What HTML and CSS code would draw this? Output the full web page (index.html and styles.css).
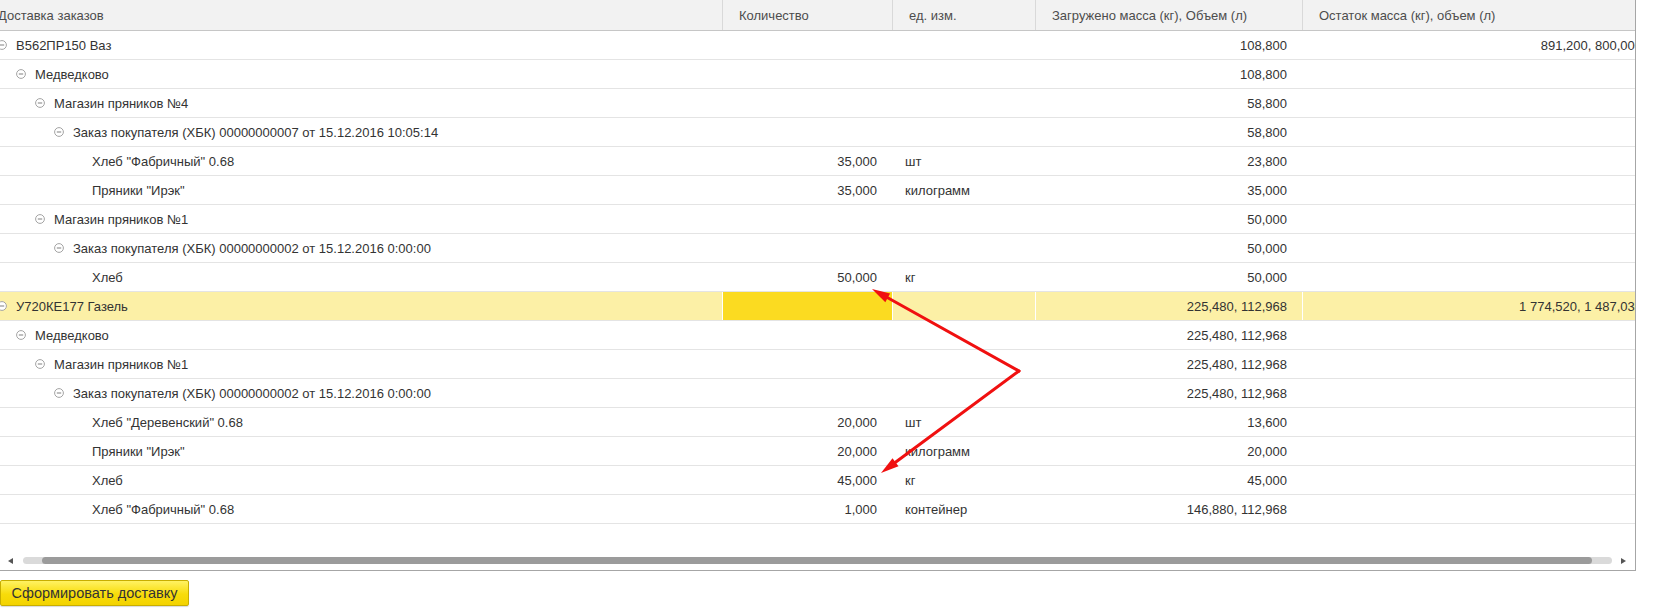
FILE: index.html
```html
<!DOCTYPE html>
<html lang="ru">
<head>
<meta charset="utf-8">
<title>Доставка заказов</title>
<link rel="stylesheet" href="styles.css">
</head>
<body>
<div class="frame">
  <div class="viewport">
    <div class="table">
      <div class="row head">
        <div class="cell c1">Доставка заказов</div>
        <div class="cell c2">Количество</div>
        <div class="cell c3">ед. изм.</div>
        <div class="cell c4">Загружено масса (кг), Объем (л)</div>
        <div class="cell c5">Остаток масса (кг), объем (л)</div>
      </div>

      <div class="row">
        <div class="cell c1 l0"><svg class="tg" viewBox="0 0 10 10"><circle cx="5" cy="5" r="4.4"/><line x1="2.8" y1="5" x2="7.2" y2="5"/></svg>В562ПР150 Ваз</div>
        <div class="cell c2 num"></div><div class="cell c3"></div>
        <div class="cell c4 num">108,800</div>
        <div class="cell c5 num">891,200, 800,000</div>
      </div>
      <div class="row">
        <div class="cell c1 l1"><svg class="tg" viewBox="0 0 10 10"><circle cx="5" cy="5" r="4.4"/><line x1="2.8" y1="5" x2="7.2" y2="5"/></svg>Медведково</div>
        <div class="cell c2 num"></div><div class="cell c3"></div>
        <div class="cell c4 num">108,800</div><div class="cell c5 num"></div>
      </div>
      <div class="row">
        <div class="cell c1 l2"><svg class="tg" viewBox="0 0 10 10"><circle cx="5" cy="5" r="4.4"/><line x1="2.8" y1="5" x2="7.2" y2="5"/></svg>Магазин пряников №4</div>
        <div class="cell c2 num"></div><div class="cell c3"></div>
        <div class="cell c4 num">58,800</div><div class="cell c5 num"></div>
      </div>
      <div class="row">
        <div class="cell c1 l3"><svg class="tg" viewBox="0 0 10 10"><circle cx="5" cy="5" r="4.4"/><line x1="2.8" y1="5" x2="7.2" y2="5"/></svg>Заказ покупателя (ХБК) 00000000007 от 15.12.2016 10:05:14</div>
        <div class="cell c2 num"></div><div class="cell c3"></div>
        <div class="cell c4 num">58,800</div><div class="cell c5 num"></div>
      </div>
      <div class="row">
        <div class="cell c1 l4">Хлеб "Фабричный" 0.68</div>
        <div class="cell c2 num">35,000</div><div class="cell c3">шт</div>
        <div class="cell c4 num">23,800</div><div class="cell c5 num"></div>
      </div>
      <div class="row">
        <div class="cell c1 l4">Пряники "Ирэк"</div>
        <div class="cell c2 num">35,000</div><div class="cell c3">килограмм</div>
        <div class="cell c4 num">35,000</div><div class="cell c5 num"></div>
      </div>
      <div class="row">
        <div class="cell c1 l2"><svg class="tg" viewBox="0 0 10 10"><circle cx="5" cy="5" r="4.4"/><line x1="2.8" y1="5" x2="7.2" y2="5"/></svg>Магазин пряников №1</div>
        <div class="cell c2 num"></div><div class="cell c3"></div>
        <div class="cell c4 num">50,000</div><div class="cell c5 num"></div>
      </div>
      <div class="row">
        <div class="cell c1 l3"><svg class="tg" viewBox="0 0 10 10"><circle cx="5" cy="5" r="4.4"/><line x1="2.8" y1="5" x2="7.2" y2="5"/></svg>Заказ покупателя (ХБК) 00000000002 от 15.12.2016 0:00:00</div>
        <div class="cell c2 num"></div><div class="cell c3"></div>
        <div class="cell c4 num">50,000</div><div class="cell c5 num"></div>
      </div>
      <div class="row">
        <div class="cell c1 l4">Хлеб</div>
        <div class="cell c2 num">50,000</div><div class="cell c3">кг</div>
        <div class="cell c4 num">50,000</div><div class="cell c5 num"></div>
      </div>

      <div class="row selected">
        <div class="cell c1 l0"><svg class="tg" viewBox="0 0 10 10"><circle cx="5" cy="5" r="4.4"/><line x1="2.8" y1="5" x2="7.2" y2="5"/></svg>У720КЕ177 Газель</div>
        <div class="cell c2 num current"></div><div class="cell c3"></div>
        <div class="cell c4 num">225,480, 112,968</div>
        <div class="cell c5 num">1 774,520, 1 487,032</div>
      </div>
      <div class="row">
        <div class="cell c1 l1"><svg class="tg" viewBox="0 0 10 10"><circle cx="5" cy="5" r="4.4"/><line x1="2.8" y1="5" x2="7.2" y2="5"/></svg>Медведково</div>
        <div class="cell c2 num"></div><div class="cell c3"></div>
        <div class="cell c4 num">225,480, 112,968</div><div class="cell c5 num"></div>
      </div>
      <div class="row">
        <div class="cell c1 l2"><svg class="tg" viewBox="0 0 10 10"><circle cx="5" cy="5" r="4.4"/><line x1="2.8" y1="5" x2="7.2" y2="5"/></svg>Магазин пряников №1</div>
        <div class="cell c2 num"></div><div class="cell c3"></div>
        <div class="cell c4 num">225,480, 112,968</div><div class="cell c5 num"></div>
      </div>
      <div class="row">
        <div class="cell c1 l3"><svg class="tg" viewBox="0 0 10 10"><circle cx="5" cy="5" r="4.4"/><line x1="2.8" y1="5" x2="7.2" y2="5"/></svg>Заказ покупателя (ХБК) 00000000002 от 15.12.2016 0:00:00</div>
        <div class="cell c2 num"></div><div class="cell c3"></div>
        <div class="cell c4 num">225,480, 112,968</div><div class="cell c5 num"></div>
      </div>
      <div class="row">
        <div class="cell c1 l4">Хлеб "Деревенский" 0.68</div>
        <div class="cell c2 num">20,000</div><div class="cell c3">шт</div>
        <div class="cell c4 num">13,600</div><div class="cell c5 num"></div>
      </div>
      <div class="row">
        <div class="cell c1 l4">Пряники "Ирэк"</div>
        <div class="cell c2 num">20,000</div><div class="cell c3">килограмм</div>
        <div class="cell c4 num">20,000</div><div class="cell c5 num"></div>
      </div>
      <div class="row">
        <div class="cell c1 l4">Хлеб</div>
        <div class="cell c2 num">45,000</div><div class="cell c3">кг</div>
        <div class="cell c4 num">45,000</div><div class="cell c5 num"></div>
      </div>
      <div class="row">
        <div class="cell c1 l4">Хлеб "Фабричный" 0.68</div>
        <div class="cell c2 num">1,000</div><div class="cell c3">контейнер</div>
        <div class="cell c4 num">146,880, 112,968</div><div class="cell c5 num"></div>
      </div>
    </div>
  </div>
  <div class="hscroll">
    <span class="arr arr-left"></span>
    <div class="track"><div class="thumb"></div></div>
    <span class="arr arr-right"></span>
  </div>
</div>

<div class="actions">
  <button class="btn" type="button">Сформировать доставку</button>
</div>

<svg class="annot" width="1655" height="609" viewBox="0 0 1655 609">
  <line x1="1019" y1="371" x2="887.7" y2="297.8" stroke="#f01010" stroke-width="3" stroke-linecap="round"/>
  <polygon points="872,289 890.1,293.4 885.3,302.2" fill="#f01010"/>
  <line x1="1019" y1="371" x2="895.5" y2="462.3" stroke="#f01010" stroke-width="3" stroke-linecap="round"/>
  <polygon points="881,473 892.5,458.3 898.5,466.3" fill="#f01010"/>
</svg>
</body>
</html>
```

FILE: styles.css
```css
html, body {
  margin: 0;
  padding: 0;
  background: #ffffff;
}

body {
  font-family: "Liberation Sans", Arial, sans-serif;
  font-size: 13px;
  color: #333333;
  position: relative;
  width: 1655px;
  height: 609px;
  overflow: hidden;
}

.frame {
  width: 1636px;
  height: 571px;
  box-sizing: border-box;
  border-right: 1px solid #a6a6a6;
  border-bottom: 1px solid #a6a6a6;
  display: flex;
  flex-direction: column;
  overflow: hidden;
}

.viewport {
  flex: 1;
  overflow: hidden;
}

.table {
  margin-left: -18px;
  width: 1676px;
}

.row {
  display: grid;
  grid-template-columns: 741px 170px 143px 267px 355px;
  height: 29px;
  box-sizing: border-box;
  border-bottom: 1px solid #e4e4e4;
}

.row.head {
  height: 31px;
  background: #f2f2f2;
  border-bottom: 1px solid #c6c6c6;
  color: #4d4d4d;
}

.cell {
  display: flex;
  align-items: center;
  box-sizing: border-box;
  border-right: 1px solid transparent;
  white-space: nowrap;
  overflow: hidden;
  padding: 0 15px 0 12px;
}

.head .cell {
  border-right-color: #d9d9d9;
  padding-left: 16px;
}

.cell.num {
  justify-content: flex-end;
}

.c5 {
  overflow: visible;
}

.selected {
  background: #fcf0a6;
}

.selected .cell {
  border-right-color: #ffffff;
}

.selected .cell.current {
  background: #fbdb21;
}

/* tree levels */
.l0 { padding-left: 15px; }
.l1 { padding-left: 34px; }
.l2 { padding-left: 53px; }
.l3 { padding-left: 72px; }
.l4 { padding-left: 110px; }

.tg {
  width: 10px;
  height: 10px;
  flex: none;
  margin-right: 9px;
}

.tg circle {
  fill: #ffffff;
  stroke: #a3a3a3;
  stroke-width: 1;
}

.tg line {
  stroke: #8a8a8a;
  stroke-width: 1.1;
}

/* horizontal scrollbar */
.hscroll {
  height: 20px;
  flex: none;
  display: flex;
  align-items: flex-start;
  padding: 7px 9px 0 8px;
  box-sizing: border-box;
}

.arr {
  width: 0;
  height: 0;
  border-top: 3px solid transparent;
  border-bottom: 3px solid transparent;
  margin-top: 1px;
  flex: none;
}

.arr-left {
  border-right: 5px solid #555555;
  margin-right: 10px;
}

.arr-right {
  border-left: 5px solid #555555;
  margin-left: 9px;
}

.track {
  flex: 1;
  height: 7px;
  border-radius: 4px;
  background: #dadada;
  display: flex;
}

.thumb {
  flex: 1;
  margin: 0 20px 0 19px;
  border-radius: 4px;
  background: #9b9b9b;
}

/* actions */
.actions {
  padding-top: 9px;
  display: flex;
}

.btn {
  width: 189px;
  height: 26px;
  box-sizing: border-box;
  border: 1px solid #c8ae00;
  border-radius: 2px;
  background: linear-gradient(#fff263, #f8dc0a 55%, #f3d300);
  font-family: "Liberation Sans", Arial, sans-serif;
  font-size: 14.5px;
  color: #333333;
  padding: 0;
  text-align: center;
  box-shadow: 0 1px 1px rgba(0, 0, 0, 0.15);
}

.annot {
  position: absolute;
  left: 0;
  top: 0;
  pointer-events: none;
}
```
